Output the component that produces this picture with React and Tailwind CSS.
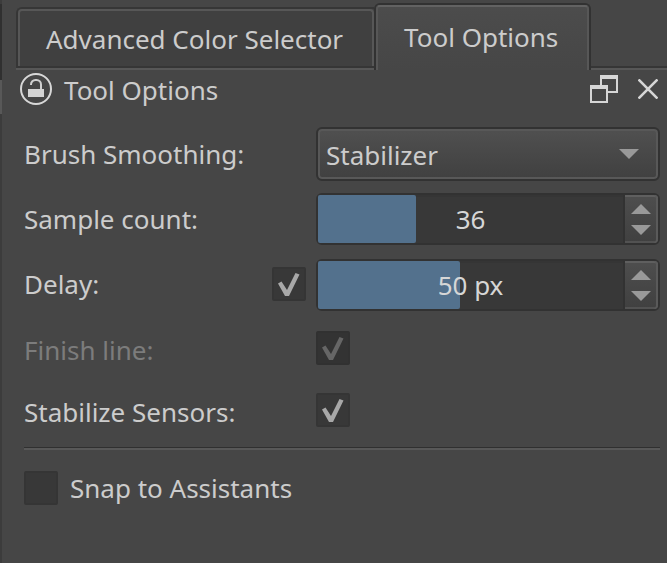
import { useState } from "react";

function Tick({ className }) {
  return (
    <svg
      viewBox="0 0 34 34"
      aria-hidden="true"
      className={`pointer-events-none col-start-1 row-start-1 size-[34px] ${className}`}
    >
      <path d="M6 16.5 9.5 14.5 15 23 23.5 6 27.5 7.5 17 29H13Z" fill="currentColor" />
    </svg>
  );
}

function CheckBox({ id, defaultChecked, disabled }) {
  return (
    <span className="grid shrink-0">
      <input
        id={id}
        type="checkbox"
        defaultChecked={defaultChecked}
        disabled={disabled}
        className="peer col-start-1 row-start-1 size-[34px] appearance-none rounded-xs border-2 border-[#353535] bg-[#383838] disabled:border-[#313131] disabled:bg-[#333333]"
      />
      <Tick className="hidden text-[#a8a8a8] peer-checked:block peer-disabled:text-[#666666]" />
    </span>
  );
}

function Spin({ id, label, initial, suffix, percent }) {
  const [value, setValue] = useState(initial);
  return (
    <div className="flex h-[52px] w-full rounded-md border-2 border-[#323232] bg-[#383838]">
      <div className="relative min-w-0 flex-1 border-t-2 border-[#353535]">
        <div
          className="absolute -top-0.5 bottom-0 left-0 rounded-xs bg-[#53718d]"
          style={{ width: `${percent}%` }}
        />
        <input
          id={id}
          type="text"
          aria-label={label}
          value={`${value}${suffix}`}
          onChange={(e) => setValue(parseInt(e.target.value, 10) || 0)}
          className="relative h-full w-full bg-transparent pb-0.5 text-center text-[#d6d6d6] outline-none"
        />
      </div>
      <div className="flex w-[35px] flex-col items-center justify-center gap-[11px] rounded-r-sm border-l-2 border-[#323232] bg-linear-to-b from-[#4e4e4e] to-[#404040] pr-0.5 shadow-[inset_-2px_0_#5a5a5a,inset_0_2px_#5f5f5f,inset_0_-2px_#525252]">
        <button type="button" aria-label="Increase" onClick={() => setValue(value + 1)}>
          <svg viewBox="0 0 20 10" className="h-2.5 w-5">
            <path d="M0 10 10 0 20 10Z" fill="#999999" />
          </svg>
        </button>
        <button type="button" aria-label="Decrease" onClick={() => setValue(value - 1)}>
          <svg viewBox="0 0 20 10" className="h-2.5 w-5">
            <path d="M0 0H20L10 10Z" fill="#999999" />
          </svg>
        </button>
      </div>
    </div>
  );
}

export default function App() {
  return (
    <div className="flex min-h-screen bg-[#464646] font-['Noto_Sans',sans-serif] text-[26px] leading-9 text-[#cccccc]">
      <div className="flex w-0.5 flex-col bg-[#3c3c3c] pt-1">
        <div className="h-[76px] bg-[#303030]" />
        <div className="h-[34px] bg-[#585858]" />
      </div>

      <div className="min-w-0 flex-1">
        <div role="tablist" className="flex items-end pt-[3px] pl-3.5 whitespace-nowrap">
          <div className="h-[63px] rounded-tl-md border-t-2 border-l-2 border-[#363636] bg-[#404040]">
            <button
              type="button"
              role="tab"
              aria-selected="false"
              className="block h-[57px] rounded-t-sm border-x-2 border-t-2 border-[#575757] pr-[29px] pl-[26px]"
            >
              Advanced Color Selector
            </button>
            <div className="-ml-0.5 h-1 border-t-2 border-b-2 border-t-[#363636] border-b-[#575757]" />
          </div>
          <div className="h-[67px] rounded-t-md border-x-2 border-t-2 border-[#323232] bg-[#464646]">
            <button
              type="button"
              role="tab"
              aria-selected="true"
              className="block h-[65px] rounded-t-sm border-x-2 border-t-2 border-x-[#575757] border-t-[#626262] bg-linear-to-b from-[#4c4c4c] to-[#464646] pr-[29px] pb-1 pl-[26px]"
            >
              Tool Options
            </button>
          </div>
          <div className="h-1 flex-1 border-t-2 border-b-2 border-t-[#363636] border-b-[#575757]" />
        </div>

        <header className="flex h-[52px] items-center pr-[9px] pb-3.5 pl-[18px]">
          <button type="button" aria-label="Lock docker">
            <svg viewBox="0 0 32 32" className="size-8" fill="none">
              <circle cx="16" cy="16" r="15" stroke="#d8d8d8" strokeWidth="2" />
              <path
                d="M11 12V11.5A4.5 4.5 0 0 1 15.5 7H16.5A4.5 4.5 0 0 1 21 11.5V17"
                stroke="#d0d0d0"
                strokeWidth="2"
              />
              <path d="M8 16H24V24H8Z" fill="#d4d4d4" />
            </svg>
          </button>
          <h1 className="flex-1 pt-0.5 pl-3">Tool Options</h1>
          <button type="button" aria-label="Float docker">
            <svg viewBox="0 0 28 28" className="size-7" fill="none" stroke="#d6d6d6" strokeWidth="2">
              <path d="M11 10V1H27V17H18M1 12V27H17V12" />
              <path d="M10 2H28M0 12H18" strokeWidth="4" />
            </svg>
          </button>
          <button type="button" aria-label="Close docker" className="ml-5">
            <svg viewBox="0 0 20 20" className="size-5" fill="none" stroke="#d6d6d6" strokeWidth="2.6">
              <path d="M0.5 0.5 19.5 19.5M19.5 0.5 0.5 19.5" />
            </svg>
          </button>
        </header>

        <main className="pr-[7px] pl-[22px]">
          <div className="flex h-16 items-center">
            <label htmlFor="smoothing" className="w-[292px] shrink-0">
              Brush Smoothing:
            </label>
            <div className="relative flex-1">
              <select
                id="smoothing"
                className="block h-[54px] w-full appearance-none rounded-md border-2 border-[#323232] bg-linear-to-b from-[#505050] to-[#404040] pt-0.5 pl-2 shadow-[inset_0_0_0_2px_#585858]"
              >
                <option>Stabilizer</option>
                <option>Basic</option>
                <option>Weighted</option>
                <option>None</option>
              </select>
              <svg
                viewBox="0 0 20 10"
                aria-hidden="true"
                className="pointer-events-none absolute top-[22px] right-[21px] h-2.5 w-5"
              >
                <path d="M0 0H20L10 10Z" fill="#999999" />
              </svg>
            </div>
          </div>

          <div className="flex h-[66px] items-center">
            <label htmlFor="samples" className="w-[292px] shrink-0">
              Sample count:
            </label>
            <Spin id="samples" initial={36} suffix="" percent={32} />
          </div>

          <div className="flex h-[66px] items-center">
            <div className="flex w-[292px] shrink-0 items-center justify-between pr-2.5 pb-0.5">
              <label htmlFor="delay-on">Delay:</label>
              <CheckBox id="delay-on" defaultChecked />
            </div>
            <Spin id="delay" label="Delay" initial={50} suffix=" px" percent={46.4} />
          </div>

          <div className="flex h-[60px] items-center">
            <label htmlFor="finish" className="w-[292px] pt-1 text-[#7c7c7c]">
              Finish line:
            </label>
            <CheckBox id="finish" defaultChecked disabled />
          </div>

          <div className="flex h-16 items-center">
            <label htmlFor="sensors" className="w-[292px] pt-1">
              Stabilize Sensors:
            </label>
            <CheckBox id="sensors" defaultChecked />
          </div>

          <hr className="mt-[5px] h-[3px] border-t border-b-2 border-t-[#303030] border-b-[#585858]" />

          <div className="flex items-center gap-3 pt-5">
            <CheckBox id="snap" />
            <label htmlFor="snap">Snap to Assistants</label>
          </div>
        </main>
      </div>
    </div>
  );
}
